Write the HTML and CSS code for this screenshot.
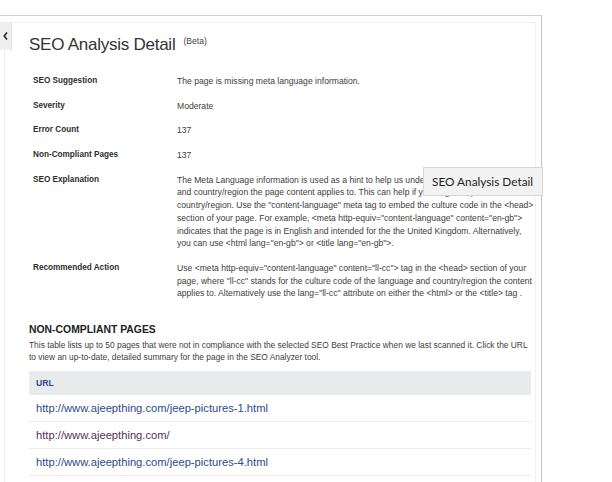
FILE: index.html
```html
<!DOCTYPE html>
<html lang="en">
<head>
<meta charset="utf-8">
<title>SEO Analysis Detail</title>
<link rel="stylesheet" href="styles.css">
</head>
<body>
<div class="frame">
  <div class="card">
    <button class="back" aria-label="Back">
      <svg width="5" height="8" viewBox="0 0 5 8"><polyline points="4,0.6 1.2,4 4,7.4" fill="none" stroke="#1e1e1e" stroke-width="1.5"/></svg>
    </button>
    <h1 class="title">SEO Analysis Detail<sup class="beta">(Beta)</sup></h1>
    <dl class="details">
      <dt>SEO Suggestion</dt>
      <dd>The page is missing meta language information.</dd>
      <dt>Severity</dt>
      <dd>Moderate</dd>
      <dt>Error Count</dt>
      <dd>137</dd>
      <dt>Non-Compliant Pages</dt>
      <dd>137</dd>
      <dt>SEO Explanation</dt>
      <dd>The Meta Language information is used as a hint to help us understand the language<br>and country/region the page content applies to. This can help if you target a specific<br>country/region. Use the "content-language" meta tag to embed the culture code in the &lt;head&gt;<br>section of your page. For example, &lt;meta http-equiv="content-language" content="en-gb"&gt;<br>indicates that the page is in English and intended for the the United Kingdom. Alternatively,<br>you can use &lt;html lang="en-gb"&gt; or &lt;title lang="en-gb"&gt;.</dd>
      <dt>Recommended Action</dt>
      <dd>Use &lt;meta http-equiv="content-language" content="ll-cc"&gt; tag in the &lt;head&gt; section of your<br>page, where "ll-cc" stands for the culture code of the language and country/region the content<br>applies to. Alternatively use the lang="ll-cc" attribute on either the &lt;html&gt; or the &lt;title&gt; tag .</dd>
    </dl>
    <h2 class="section-title">NON-COMPLIANT PAGES</h2>
    <p class="section-desc">This table lists up to 50 pages that were not in compliance with the selected SEO Best Practice when we last scanned it. Click the URL<br>to view an up-to-date, detailed summary for the page in the SEO Analyzer tool.</p>
    <table class="urls">
      <thead><tr><th>URL</th></tr></thead>
      <tbody>
        <tr><td><a href="#">http://www.ajeepthing.com/jeep-pictures-1.html</a></td></tr>
        <tr><td><a class="visited" href="#">http://www.ajeepthing.com/</a></td></tr>
        <tr><td><a href="#">http://www.ajeepthing.com/jeep-pictures-4.html</a></td></tr>
        <tr><td><a href="#">http://www.ajeepthing.com/jeep-pictures-2.html</a></td></tr>
      </tbody>
    </table>
  </div>
</div>
<div class="tooltip">SEO Analysis Detail</div>
</body>
</html>
```

FILE: styles.css
```css
html, body {
  margin: 0;
  padding: 0;
  background: #ffffff;
  overflow: hidden;
  height: 100%;
}

body {
  font-family: "Liberation Sans", Arial, sans-serif;
  color: #333333;
  position: relative;
}

.frame {
  margin-top: 15px;
  width: 542px;
  box-sizing: border-box;
  border-top: 1px solid #cfcfcf;
  border-right: 1px solid #c4c4c4;
  padding: 6px 5px 0 4px;
  min-height: 520px;
}

.card {
  position: relative;
  border: 1px solid #f1f1f1;
  padding: 0 4px 40px 24px;
  background: #ffffff;
}

.back {
  position: absolute;
  left: -5px;
  top: -1px;
  width: 12px;
  height: 28px;
  padding: 0;
  margin: 0;
  border: none;
  border-right: 1px solid #e2e2e2;
  background: #efefef;
  display: flex;
  align-items: center;
  justify-content: center;
}

.title {
  margin: 12px 0 0;
  font-size: 17px;
  line-height: 20px;
  font-weight: normal;
  color: #333333;
  letter-spacing: -0.25px;
}

.beta {
  font-size: 8.6px;
  line-height: 9px;
  letter-spacing: 0;
  margin-left: 8px;
  vertical-align: top;
  position: relative;
  top: 1.5px;
  color: #444444;
}

.details {
  margin: 14.5px 0 0;
  display: grid;
  grid-template-columns: 144px 1fr;
  font-size: 8.6px;
  line-height: 12.75px;
}

.details dt,
.details dd {
  margin: 0;
  padding: 5.9px 4px;
}

.details dt {
  font-weight: bold;
  font-size: 8.2px;
  color: #2e2e2e;
}

.details dd {
  color: #404040;
  white-space: nowrap;
}

.section-title {
  margin: 16.7px 0 0;
  font-size: 10.4px;
  line-height: 13px;
  font-weight: bold;
  color: #222222;
}

.section-desc {
  margin: 3.5px 0 0;
  font-size: 8.4px;
  line-height: 12px;
  color: #404040;
  white-space: nowrap;
}

.urls {
  margin-top: 8px;
  width: 100%;
  border-collapse: collapse;
}

.urls th {
  text-align: left;
  background: #e9eaec;
  color: #2b4a88;
  font-size: 8.6px;
  font-weight: bold;
  height: 24px;
  padding: 0 7px;
}

.urls td {
  height: 26px;
  padding: 0 7px;
  border-bottom: 1px solid #ececec;
  font-size: 11.2px;
}

.urls a {
  color: #2c4b8b;
  text-decoration: none;
}

.urls a.visited {
  color: #5b2d5e;
}

.tooltip {
  position: absolute;
  left: 423px;
  top: 167px;
  width: 120px;
  height: 29px;
  box-sizing: border-box;
  padding: 0 8px;
  background: #f2f2f2;
  border: 1px solid #d6d6d6;
  font-family: Lato, "Noto Sans", sans-serif;
  font-size: 11.8px;
  line-height: 27px;
  color: #1e1e1e;
  white-space: nowrap;
}
```
